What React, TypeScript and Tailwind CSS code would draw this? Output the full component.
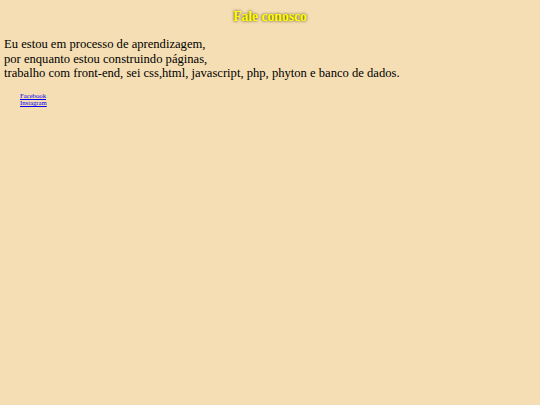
import React from 'react';

const App: React.FC = () => {
  return (
    <div className="min-h-screen bg-[#f5deb3] text-black" style={{ fontFamily: '"Liberation Serif", "Times New Roman", serif' }}>
      <h1 className="pt-[9px] text-center text-[13.6px] font-bold leading-[15px] text-[#ffff00] [text-shadow:0_0_3px_#3a2a00]">
        Fale conosco
      </h1>
      <p className="mt-[13px] pl-1 text-[12.6px] leading-[14.5px]">
        Eu estou em processo de aprendizagem,
        <br />
        por enquanto estou construindo páginas,
        <br />
        trabalho com front-end, sei css,html, javascript, php, phyton e banco de dados.
      </p>
      <ul className="mt-[11px] pl-5 text-[6.7px] leading-[7.5px]">
        <li>
          <a href="#" className="text-[#0000ee] underline">Facebook</a>
        </li>
        <li>
          <a href="#" className="text-[#0000ee] underline">Instagram</a>
        </li>
      </ul>
    </div>
  );
};

export default App;
